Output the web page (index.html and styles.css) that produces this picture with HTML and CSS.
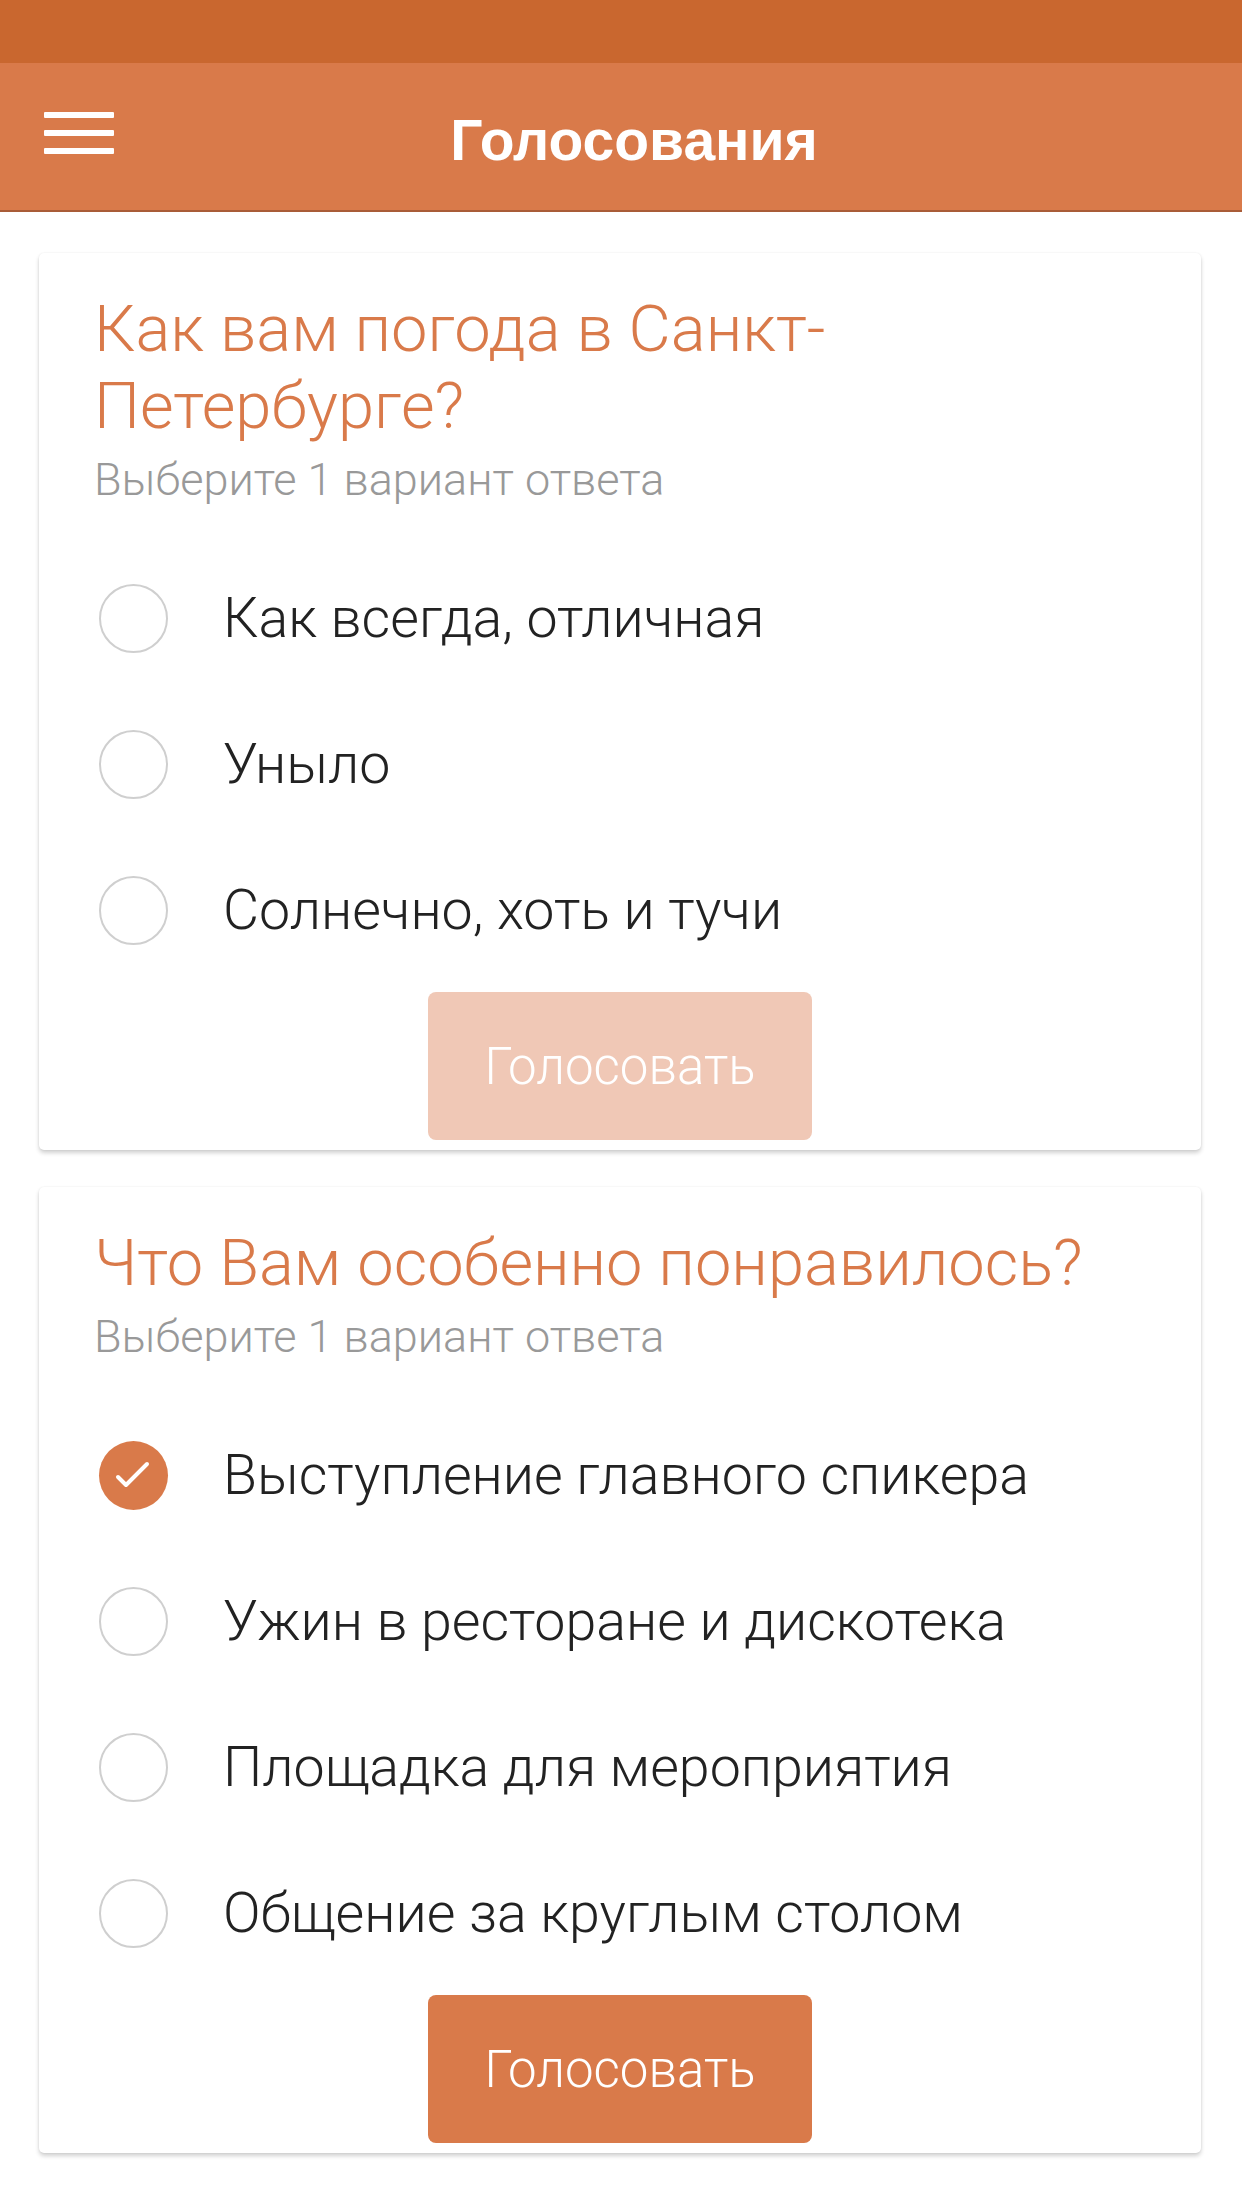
FILE: index.html
```html
<!DOCTYPE html>
<html lang="ru">
<head>
    <meta charset="UTF-8">
    <meta name="viewport" content="width=device-width, initial-scale=1.0">
    <title>Голосования</title>
    <link rel="stylesheet" href="styles.css">
</head>
<body>
    <div class="status-bar"></div>

    <header class="app-bar">
        <div class="menu-icon">
            <span></span>
            <span></span>
            <span></span>
        </div>
        <h1 class="app-title">Голосования</h1>
    </header>

    <main class="polls">
        <section class="poll-card">
            <h2 class="poll-question">Как вам погода в Санкт-Петербурге?</h2>
            <div class="poll-hint">Выберите 1 вариант ответа</div>
            <ul class="poll-options">
                <li class="option"><span class="radio"></span>Как всегда, отличная</li>
                <li class="option"><span class="radio"></span>Уныло</li>
                <li class="option"><span class="radio"></span>Солнечно, хоть и тучи</li>
            </ul>
            <button class="vote-btn" disabled>Голосовать</button>
        </section>

        <section class="poll-card">
            <h2 class="poll-question">Что Вам особенно понравилось?</h2>
            <div class="poll-hint">Выберите 1 вариант ответа</div>
            <ul class="poll-options">
                <li class="option">
                    <span class="radio checked">
                        <svg viewBox="0 0 68 68" width="68" height="68"><polyline points="18,36 26,44 47,23" fill="none" stroke="#fff" stroke-width="4" stroke-linecap="round" stroke-linejoin="round"/></svg>
                    </span>Выступление главного спикера
                </li>
                <li class="option"><span class="radio"></span>Ужин в ресторане и дискотека</li>
                <li class="option"><span class="radio"></span>Площадка для мероприятия</li>
                <li class="option"><span class="radio"></span>Общение за круглым столом</li>
            </ul>
            <button class="vote-btn">Голосовать</button>
        </section>
    </main>
</body>
</html>
```

FILE: styles.css
```css
body {
    margin: 0;
    padding: 0;
    font-family: Roboto, "Liberation Sans", sans-serif;
    background: white;
    color: #222;
}

.status-bar {
    height: 63px;
    background: #c9672f;
}

.app-bar {
    height: 147px;
    background: #d97a4a;
    border-bottom: 2px solid #a95c38;
    display: flex;
    align-items: center;
    padding: 0 88px 0 44px;
}

.menu-icon {
    width: 70px;
    display: flex;
    flex-direction: column;
    gap: 12px;
    margin-top: -8px;
}

.menu-icon span {
    display: block;
    height: 6px;
    background: white;
    border-radius: 1px;
}

.app-title {
    flex: 1;
    margin: 6px 0 0 0;
    text-align: center;
    font-family: "Liberation Sans", Arial, sans-serif;
    font-weight: 700;
    font-size: 57px;
    color: white;
}

.polls {
    padding: 41px 41px 40px 39px;
    display: flex;
    flex-direction: column;
    gap: 37px;
}

.poll-card {
    background: white;
    border-radius: 5px;
    padding: 38px 55px 10px 55px;
    box-shadow: 0 3px 4px rgba(0, 0, 0, 0.18), 0 0 2px rgba(0, 0, 0, 0.08);
    display: flex;
    flex-direction: column;
}

.poll-question {
    margin: 0;
    font-size: 65px;
    font-weight: 300;
    line-height: 77px;
    color: #d97a4a;
    max-width: 1010px;
}

.poll-hint {
    margin-top: 11px;
    font-size: 45px;
    font-weight: 300;
    line-height: 48px;
    color: #999;
}

.poll-options {
    list-style: none;
    margin: 41px 0 0 0;
    padding: 0;
}

.option {
    height: 146px;
    display: flex;
    align-items: center;
    font-size: 55.5px;
    font-weight: 300;
    color: #222;
}

.radio {
    width: 69px;
    height: 69px;
    box-sizing: border-box;
    border: 2.5px solid #cfcfcf;
    border-radius: 50%;
    margin: 0 55px 0 5px;
    flex-shrink: 0;
    display: flex;
    align-items: center;
    justify-content: center;
}

.radio.checked {
    border: none;
    background: #d97a4a;
}

.vote-btn {
    align-self: center;
    margin-top: 9px;
    width: 384px;
    height: 148px;
    border: none;
    border-radius: 8px;
    background: #d97a4a;
    color: white;
    font-family: Roboto, "Liberation Sans", sans-serif;
    font-size: 51px;
    font-weight: 300;
}

.vote-btn:disabled {
    background: #f0c8b6;
}
```
